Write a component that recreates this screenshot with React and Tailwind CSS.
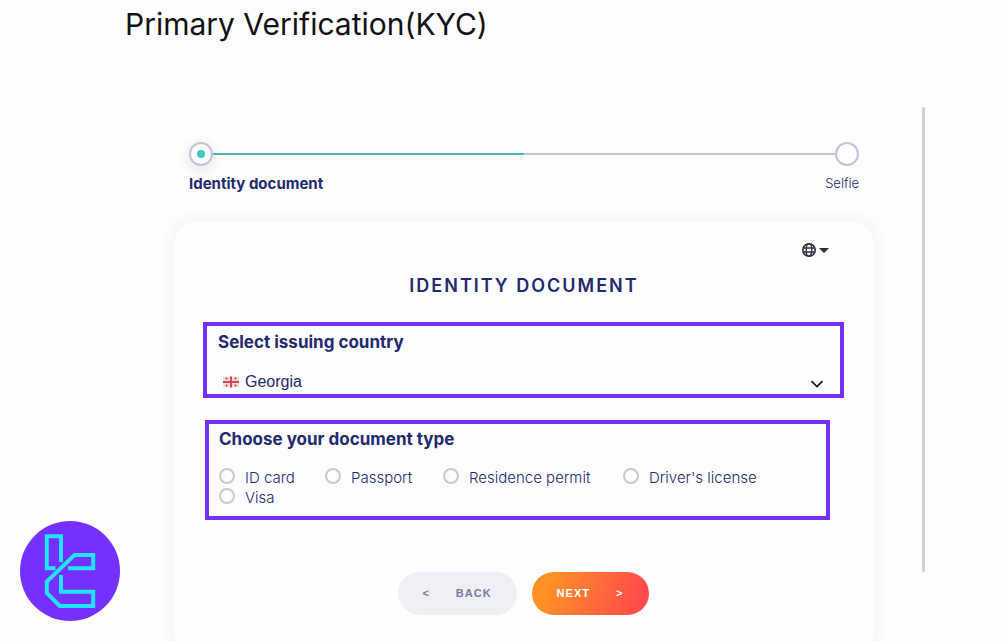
const documentTypes = ["ID card", "Passport", "Residence permit", "Driver's license", "Visa"];

function GlobeIcon() {
  return (
    <svg viewBox="0 0 14 14" className="size-[14px]" fill="none" stroke="#2b2f3a" strokeWidth="1.6" aria-hidden="true">
      <circle cx="7" cy="7" r="6.2" />
      <ellipse cx="7" cy="7" rx="2.8" ry="6.2" strokeWidth="1.3" />
      <path d="M1.3 5h11.4M1.3 9h11.4" strokeWidth="1.3" />
    </svg>
  );
}

function GeorgiaFlag() {
  return (
    <svg viewBox="0 0 16 12" className="h-3 w-4 shrink-0" aria-hidden="true">
      <rect y="0.5" width="16" height="11" fill="#f0dede" />
      <path d="M7 0.5h2V5h7v2H9v4.5H7V7H0V5h7z" fill="#d9474d" />
      <path
        d="M3.5 1v3M2 2.5h3M12.5 1v3M11 2.5h3M3.5 8v3M2 9.5h3M12.5 8v3M11 9.5h3"
        stroke="#e07076"
      />
    </svg>
  );
}

function BrandLogo() {
  return (
    <svg viewBox="0 0 100 100" className="size-[100px]" role="img" aria-label="Brand logo">
      <circle cx="50" cy="50" r="50" fill="#7530fd" />
      <g fill="none" stroke="#1fe5ff" strokeWidth="4">
        <path d="M35.5 47.3H26.8V15.2H41V41" />
        <path d="M48 47.3H73.2V34H54.5L26.8 60.5V72L39.8 84.9H73.2V70.8H41V54" />
      </g>
    </svg>
  );
}

function Stepper() {
  return (
    <nav aria-label="Verification steps" className="px-[15px]">
      <div className="flex items-center">
        <span className="flex size-6 items-center justify-center rounded-full border-2 border-[#c5c2d8] bg-white shadow-[0_3px_10px_3px_rgba(60,60,90,0.08)]">
          <span className="size-2 rounded-full bg-[#3cc8bf]" />
        </span>
        <span className="h-[2px] flex-1 bg-[#45b9b7]" />
        <span className="h-[2px] flex-1 bg-[#c5c2d8]" />
        <span className="size-6 rounded-full border-2 border-[#c5c2d8] bg-white" />
      </div>
      <div className="mt-2 flex justify-between text-[#23296f]">
        <span className="text-[15px] leading-5 font-bold">Identity document</span>
        <span className="text-[13px] leading-[18px] font-light">Selfie</span>
      </div>
    </nav>
  );
}

export default function App() {
  return (
    <div className="h-screen overflow-hidden bg-[#fdfdfd] font-['Inter',sans-serif] text-[#23296f]">
      <h1 className="pt-1 pl-[125px] text-[30px] leading-10 text-[#111]">Primary Verification(KYC)</h1>

      <main className="mt-[63px] flex items-start gap-12 pr-[83px] pl-[174px]">
        <div className="min-w-0 flex-1 pt-[35px]">
          <Stepper />

          <form
            onSubmit={(event) => event.preventDefault()}
            className="mt-7 rounded-[24px] bg-[#fdfdfd] px-[29px] pt-5 pb-10 shadow-[0_0_16px_6px_rgba(0,0,0,0.04)]"
          >
            <div className="flex justify-end pr-4">
              <button type="button" aria-label="Change language" className="flex h-4 items-center gap-[3px]">
                <GlobeIcon />
                <svg viewBox="0 0 10 5" className="h-[5px] w-[10px]" fill="#2b2f3a" aria-hidden="true">
                  <path d="M0 0h10L5 5z" />
                </svg>
              </button>
            </div>

            <h2 className="mt-4 text-center text-[18px] leading-6 font-semibold tracking-[2px]">IDENTITY DOCUMENT</h2>

            <section className="mt-6 mr-px h-[76px] border-4 border-[#7530f5] pt-[6px] pr-4 pl-[11px]">
              <label htmlFor="country" className="block text-[17px] leading-5 font-bold">
                Select issuing country
              </label>
              <div className="mt-[18px] flex items-center pl-[5px]">
                <GeorgiaFlag />
                <select
                  id="country"
                  className="h-6 min-w-0 flex-1 appearance-none bg-transparent pl-[6px] font-['Liberation_Sans',sans-serif] text-[16px] leading-6"
                >
                  <option>Georgia</option>
                </select>
                <svg viewBox="0 0 14 8" className="mt-1 h-2 w-[14px]" fill="none" stroke="#111" strokeWidth="1.7" aria-hidden="true">
                  <path d="M1.5 1.2L7 6.5l5.5-5.3" />
                </svg>
              </div>
            </section>

            <fieldset className="mt-[22px] mr-[15px] ml-[2px] h-[100px] border-4 border-[#7530f5] pt-[5px] pl-[10px]">
              <legend className="float-left w-full text-[17px] leading-5 font-bold">Choose your document type</legend>
              <div className="clear-both grid grid-cols-[106px_118px_180px_auto] pt-[19px]">
                {documentTypes.map((type) => (
                  <label key={type} className="flex h-5 items-center gap-[10px] text-[15px] leading-5 font-light whitespace-nowrap">
                    <input
                      type="radio"
                      name="document-type"
                      className="mb-1 size-4 shrink-0 appearance-none rounded-full border-2 border-[#c8c8d2] checked:border-[5px] checked:border-[#3cc8bf]"
                    />
                    {type}
                  </label>
                ))}
              </div>
            </fieldset>

            <div className="mt-[52px] flex justify-center gap-[15px] pr-[2px] font-['Liberation_Sans',sans-serif] text-[11px] font-bold tracking-[1px]">
              <button type="button" className="flex h-[43px] w-[119px] items-center justify-center gap-[26px] rounded-full bg-[#eff0f5] text-[#747ba5]">
                <span>&lt;</span>
                <span>BACK</span>
              </button>
              <button
                type="submit"
                className="flex h-[43px] w-[117px] items-center justify-center gap-[26px] rounded-full bg-linear-[110deg] from-[#ff9126] from-15% to-[#ff4b4b] to-90% text-white"
              >
                <span>NEXT</span>
                <span>&gt;</span>
              </button>
            </div>
          </form>
        </div>

        <div className="h-[465px] w-[3px] rounded-full bg-[#d2d2d2]" aria-hidden="true" />
      </main>

      <div className="fixed bottom-5 left-5">
        <BrandLogo />
      </div>
    </div>
  );
}
